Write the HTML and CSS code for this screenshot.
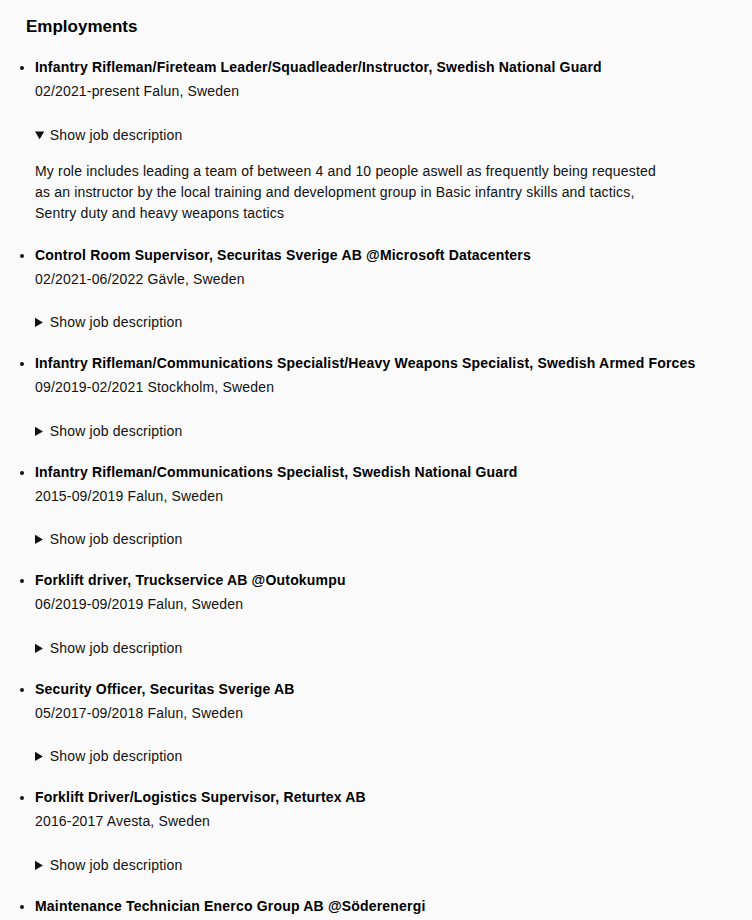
FILE: index.html
```html
<!DOCTYPE html>
<html lang="en">
<head>
<meta charset="utf-8">
<title>Employments</title>
<link rel="stylesheet" href="styles.css">
</head>
<body>
<section class="employments">
  <h2 class="heading">Employments</h2>
  <ul class="jobs">
    <li class="job">
      <div class="job-title">Infantry Rifleman/Fireteam Leader/Squadleader/Instructor, Swedish National Guard</div>
      <div class="job-meta">02/2021-present Falun, Sweden</div>
      <details class="job-details" open>
        <summary>Show job description</summary>
        <p class="job-desc">My role includes leading a team of between 4 and 10 people aswell as frequently being requested<br>as an instructor by the local training and development group in Basic infantry skills and tactics,<br>Sentry duty and heavy weapons tactics</p>
      </details>
    </li>
    <li class="job">
      <div class="job-title">Control Room Supervisor, Securitas Sverige AB @Microsoft Datacenters</div>
      <div class="job-meta">02/2021-06/2022 Gävle, Sweden</div>
      <details class="job-details">
        <summary>Show job description</summary>
        <p class="job-desc"></p>
      </details>
    </li>
    <li class="job">
      <div class="job-title">Infantry Rifleman/Communications Specialist/Heavy Weapons Specialist, Swedish Armed Forces</div>
      <div class="job-meta">09/2019-02/2021 Stockholm, Sweden</div>
      <details class="job-details">
        <summary>Show job description</summary>
        <p class="job-desc"></p>
      </details>
    </li>
    <li class="job">
      <div class="job-title">Infantry Rifleman/Communications Specialist, Swedish National Guard</div>
      <div class="job-meta">2015-09/2019 Falun, Sweden</div>
      <details class="job-details">
        <summary>Show job description</summary>
        <p class="job-desc"></p>
      </details>
    </li>
    <li class="job">
      <div class="job-title">Forklift driver, Truckservice AB @Outokumpu</div>
      <div class="job-meta">06/2019-09/2019 Falun, Sweden</div>
      <details class="job-details">
        <summary>Show job description</summary>
        <p class="job-desc"></p>
      </details>
    </li>
    <li class="job">
      <div class="job-title">Security Officer, Securitas Sverige AB</div>
      <div class="job-meta">05/2017-09/2018 Falun, Sweden</div>
      <details class="job-details">
        <summary>Show job description</summary>
        <p class="job-desc"></p>
      </details>
    </li>
    <li class="job">
      <div class="job-title">Forklift Driver/Logistics Supervisor, Returtex AB</div>
      <div class="job-meta">2016-2017 Avesta, Sweden</div>
      <details class="job-details">
        <summary>Show job description</summary>
        <p class="job-desc"></p>
      </details>
    </li>
    <li class="job">
      <div class="job-title">Maintenance Technician Enerco Group AB @Söderenergi</div>
      <div class="job-meta">2014-2015 Stockholm, Sweden</div>
      <details class="job-details">
        <summary>Show job description</summary>
        <p class="job-desc"></p>
      </details>
    </li>
  </ul>
</section>
</body>
</html>
```
FILE: styles.css
```css
html, body {
  margin: 0;
  padding: 0;
  background: #fafafa;
}
body {
  font-family: "Liberation Sans", Arial, sans-serif;
  font-size: 14px;
  color: #111;
  letter-spacing: 0.17px;
}
.employments {
  padding: 16px 0 0 26px;
}
.heading {
  margin: 0;
  font-size: 17px;
  line-height: 22px;
  font-weight: bold;
  letter-spacing: 0;
  color: #000;
}
.jobs {
  margin: 19px 0 0 0;
  padding-left: 9px;
  list-style: disc;
}
.job {
  margin-bottom: 21px;
}
.job-title {
  font-weight: bold;
  line-height: 20px;
  letter-spacing: 0.19px;
  color: #000;
}
.job-meta {
  margin-top: 4px;
  line-height: 20px;
}
.job-details {
  margin-top: 23.5px;
}
.job-details summary {
  line-height: 20px;
  cursor: pointer;
}
.job-desc {
  margin: 16px 0 0 0;
  line-height: 21px;
}
.job-desc:empty {
  display: none;
}
```
